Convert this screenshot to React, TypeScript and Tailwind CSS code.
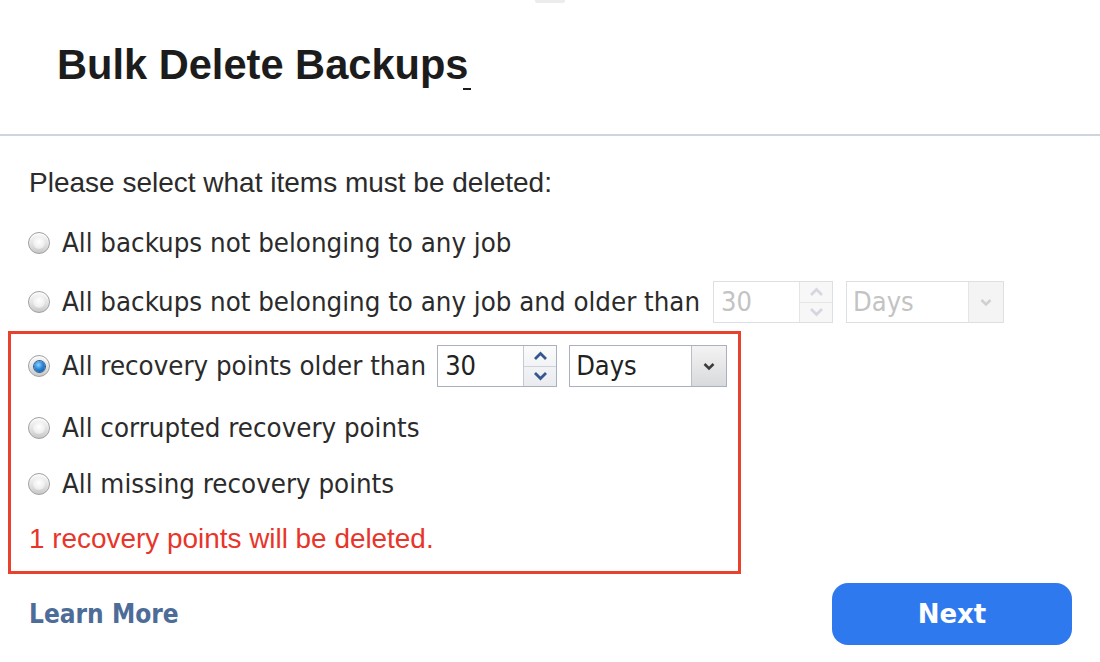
import React from "react";

function Radio({ checked = false }: { checked?: boolean }) {
  return (
    <span className="relative flex h-[22px] w-[22px] shrink-0 items-center justify-center rounded-full border border-[#a0a0a0] bg-[linear-gradient(180deg,#fafafa_0%,#e2e2e2_55%,#c8c8c8_100%)] shadow-[inset_0_1px_1px_rgba(255,255,255,0.9)]">
      {checked ? (
        <span className="h-[11px] w-[11px] rounded-full bg-[radial-gradient(circle_at_40%_35%,#8fd0ff_0%,#2b86d6_45%,#0b4d92_100%)] shadow-[0_0_0_1px_#2d5d8f]" />
      ) : (
        <span className="h-[12px] w-[12px] rounded-full bg-[radial-gradient(circle_at_50%_40%,#ffffff_0%,#efefef_60%,#dadada_100%)]" />
      )}
    </span>
  );
}

function Chevron({ up, color }: { up?: boolean; color: string }) {
  return (
    <svg width="15" height="10" viewBox="0 0 15 10">
      {up ? (
        <path d="M2 8 L7.5 2.5 L13 8" fill="none" stroke={color} strokeWidth="2.8" strokeLinejoin="miter" />
      ) : (
        <path d="M2 2 L7.5 7.5 L13 2" fill="none" stroke={color} strokeWidth="2.8" strokeLinejoin="miter" />
      )}
    </svg>
  );
}

const optFont = { fontFamily: "'DejaVu Sans Condensed', 'DejaVu Sans', sans-serif" };
const arial = { fontFamily: "'Liberation Sans', Arial, Helvetica, sans-serif" };

function Spinner({ disabled }: { disabled?: boolean }) {
  const c = disabled ? "#d4d8de" : "#35578f";
  return (
    <div
      className={
        "flex h-[42px] w-[120px] border " +
        (disabled ? "border-[#dcdfe4] bg-white" : "border-[#a9b0c2] bg-white")
      }
    >
      <div
        className={
          "flex flex-1 items-center pl-[7px] text-[27px] " +
          (disabled ? "text-[#c3c3c3]" : "text-[#222]")
        }
        style={optFont}
      >
        30
      </div>
      <div
        className={
          "flex w-[33px] flex-col border-l " +
          (disabled ? "border-[#e3e5e9] bg-[#f7f7f7]" : "border-[#c4c9d4] bg-[linear-gradient(180deg,#fbfbfb,#e9ebef)]")
        }
      >
        <div className={"flex flex-1 items-center justify-center border-b " + (disabled ? "border-[#e6e6e6]" : "border-[#cfd3dc]")}>
          <Chevron up color={c} />
        </div>
        <div className="flex flex-1 items-center justify-center">
          <Chevron color={c} />
        </div>
      </div>
    </div>
  );
}

function Select({ disabled }: { disabled?: boolean }) {
  return (
    <div
      className={
        "flex h-[42px] w-[158px] border " +
        (disabled ? "border-[#dcdfe4] bg-white" : "border-[#a9b0c2] bg-white")
      }
    >
      <div
        className={
          "flex flex-1 items-center pl-[6px] text-[27px] " +
          (disabled ? "text-[#c3c3c3]" : "text-[#222]")
        }
        style={optFont}
      >
        Days
      </div>
      <div
        className={
          "flex w-[35px] items-center justify-center border-l " +
          (disabled ? "border-[#e3e5e9] bg-[#f4f4f4]" : "border-[#b9bec8] bg-[linear-gradient(180deg,#f3f3f3,#d9dadc)]")
        }
      >
        <svg width="14" height="9" viewBox="0 0 14 9">
          <path d="M2.5 2 L7 6.5 L11.5 2" fill="none" stroke={disabled ? "#d0d0d0" : "#3c3c3c"} strokeWidth="2.6" />
        </svg>
      </div>
    </div>
  );
}

function OptionLabel({ children }: { children: React.ReactNode }) {
  return (
    <span className="ml-[12px] whitespace-nowrap text-[27.4px] text-[#2b2b2b]" style={optFont}>
      {children}
    </span>
  );
}

export default function App() {
  return (
    <div className="relative h-[662px] w-[1100px] overflow-hidden bg-white">
      <div className="absolute left-[535px] top-0 h-[3px] w-[30px] rounded-b-[2px] bg-[#ececec]" />

      {/* Header */}
      <div className="flex h-[134px] items-start pl-[57px] pt-[41px]">
        <h1 className="relative text-[41.6px] font-bold leading-[48px] text-[#1c1c1c]" style={arial}>
          Bulk Delete Backups
          <span className="absolute right-[-3px] top-[47px] h-[2px] w-[8px] bg-[#1c1c1c]" />
        </h1>
      </div>
      <div className="h-[2px] w-full bg-[#cdd5e0]" />

      {/* Body */}
      <div className="flex flex-col pl-[28px] pt-[17px]">
        <div className="flex h-[60px] items-center pl-[1px] text-[28px] text-[#2b2b2b]" style={arial}>
          Please select what items must be deleted:
        </div>
        <div className="flex h-[60px] items-center">
          <Radio />
          <OptionLabel>All backups not belonging to any job</OptionLabel>
        </div>
        <div className="flex h-[58px] items-center">
          <Radio />
          <OptionLabel>All backups not belonging to any job and older than</OptionLabel>
          <div className="ml-[13px] flex items-center gap-[13px]">
            <Spinner disabled />
            <Select disabled />
          </div>
        </div>

        <div className="ml-[-20px] flex w-[733px] flex-col border-[3px] border-[#e8412c] pl-[17px] pb-[3px]">
          <div className="flex h-[64px] items-center">
            <Radio checked />
            <OptionLabel>All recovery points older than</OptionLabel>
            <div className="ml-[11px] flex items-center gap-[12px]">
              <Spinner />
              <Select />
            </div>
          </div>
          <div className="flex h-[60px] items-center">
            <Radio />
            <OptionLabel>All corrupted recovery points</OptionLabel>
          </div>
          <div className="flex h-[52px] items-center">
            <Radio />
            <OptionLabel>All missing recovery points</OptionLabel>
          </div>
          <div className="flex h-[58px] items-center pl-[1px] text-[27.9px] text-[#e8352a]" style={arial}>
            1 recovery points will be deleted.
          </div>
        </div>
      </div>

      {/* Footer */}
      <div className="mt-[9px] flex h-[62px] items-center justify-between pl-[29px] pr-[28px]">
        <a className="text-[26px] font-bold text-[#4d6c97]" style={optFont}>
          Learn More
        </a>
        <button
          className="flex h-[62px] w-[240px] items-center justify-center rounded-[16px] bg-[#2f79ef] text-[26px] font-bold text-white"
          style={{ fontFamily: "'DejaVu Sans', Verdana, sans-serif" }}
        >
          Next
        </button>
      </div>
    </div>
  );
}
